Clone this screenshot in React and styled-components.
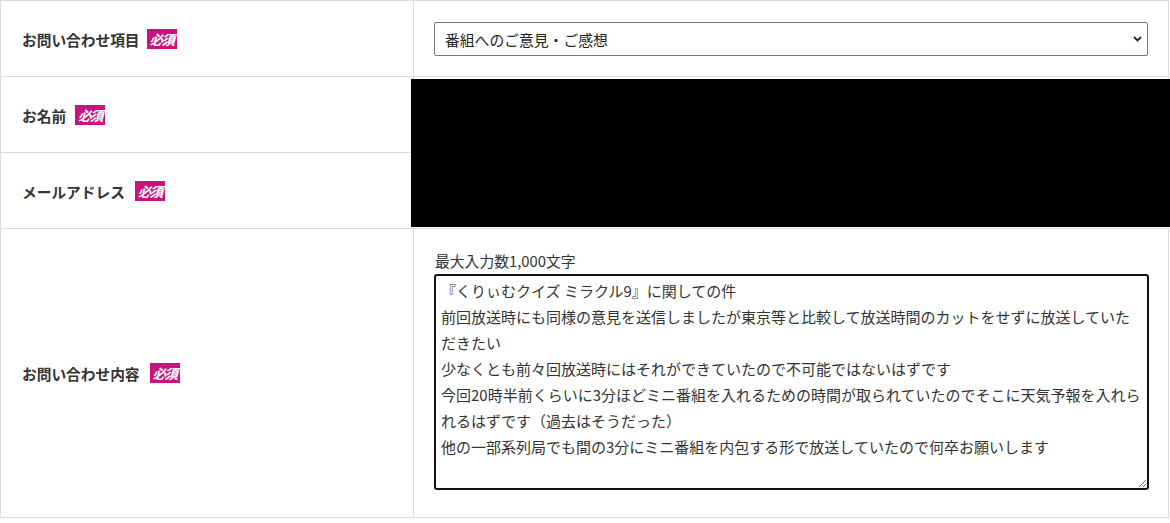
import React from "react";
import styled, { createGlobalStyle } from "styled-components";

const Global = createGlobalStyle`
  html, body { margin: 0; padding: 0; background: #fff; }
  body { font-family: "Noto Sans CJK JP", "Noto Sans", sans-serif; color: #333; }
`;

const Wrap = styled.div`
  position: relative;
  width: 1170px;
  height: 523px;
`;

const Table = styled.div`
  display: grid;
  grid-template-columns: 413px 755px;
  grid-template-rows: 76px 76px 76px 289px;
  width: 1169px;
  border-top: 1px solid #dcdcdc;
  border-left: 1px solid #dcdcdc;
  box-sizing: border-box;
`;

const Cell = styled.div`
  box-sizing: border-box;
  border-right: 1px solid #dcdcdc;
  border-bottom: 1px solid #dcdcdc;
`;

const LabelCell = styled(Cell)`
  display: flex;
  align-items: center;
  padding-left: 21px;
  padding-top: ${(p) => (p.$shift ? "1px" : "0")};
`;

const LabelText = styled.span`
  font-size: 14.7px;
  font-weight: 700;
  color: #333;
`;

const Badge = styled.span`
  display: inline-flex;
  align-items: center;
  justify-content: center;
  width: 30px;
  height: 20px;
  margin-left: ${(p) => p.$gap || 7}px;
  background: #c8127e;
  color: #fff;
  font-size: 13.5px;
  font-weight: 700;
  font-style: italic;
  letter-spacing: -1.5px;
`;

const FieldCell = styled(Cell)`
  display: flex;
  flex-direction: column;
  justify-content: ${(p) => (p.$top ? "flex-start" : "center")};
  padding: ${(p) => (p.$top ? "19px 19px 0 20px" : "0 19px 0 20px")};
`;

const SelectWrap = styled.div`
  position: relative;
  width: 714px;
  height: 34px;
  margin-top: 1px;
`;

const Select = styled.select`
  appearance: none;
  -webkit-appearance: none;
  width: 100%;
  height: 100%;
  box-sizing: border-box;
  border: 1px solid #767676;
  border-radius: 2px;
  background: #fff;
  padding: 0 28px 0 10px;
  font-family: "Noto Sans CJK JP", "Noto Sans", sans-serif;
  font-size: 14.8px;
  color: #222;
  outline: none;
`;

const Chevron = styled.svg`
  position: absolute;
  right: 6px;
  top: 14px;
  width: 9px;
  height: 6px;
  pointer-events: none;
`;

const Hint = styled.div`
  font-size: 14.8px;
  line-height: 25.6px;
  color: #333;
  margin-left: 1px;
`;

const TextArea = styled.textarea`
  display: block;
  width: 715px;
  height: 216px;
  box-sizing: border-box;
  margin: 0;
  border: 2px solid #111;
  border-radius: 3px;
  padding: 2px 4px 0 5px;
  font-family: "Noto Sans CJK JP", "Noto Sans", sans-serif;
  font-size: 15px;
  line-height: 26px;
  color: #333;
  background: #fff;
  outline: none;
  resize: both;
  overflow: hidden;
`;

const Redaction = styled.div`
  position: absolute;
  left: 411px;
  top: 79px;
  width: 759px;
  height: 148px;
  background: #000;
`;

const message = [
  "『くりぃむクイズ ミラクル9』に関しての件",
  "前回放送時にも同様の意見を送信しましたが東京等と比較して放送時間のカットをせずに放送していた",
  "だきたい",
  "少なくとも前々回放送時にはそれができていたので不可能ではないはずです",
  "今回20時半前くらいに3分ほどミニ番組を入れるための時間が取られていたのでそこに天気予報を入れら",
  "れるはずです（過去はそうだった）",
  "他の一部系列局でも間の3分にミニ番組を内包する形で放送していたので何卒お願いします",
].join("\n");

export default function App() {
  return (
    <>
      <Global />
      <Wrap>
        <Table>
          <LabelCell $shift>
            <LabelText>お問い合わせ項目</LabelText>
            <Badge>必須</Badge>
          </LabelCell>
          <FieldCell>
            <SelectWrap>
              <Select defaultValue="opinion">
                <option value="opinion">番組へのご意見・ご感想</option>
              </Select>
              <Chevron viewBox="0 0 9 6">
                <path d="M1 1 L4.5 4.5 L8 1" fill="none" stroke="#222" strokeWidth="1.8" />
              </Chevron>
            </SelectWrap>
          </FieldCell>

          <LabelCell $shift>
            <LabelText>お名前</LabelText>
            <Badge $gap={9}>必須</Badge>
          </LabelCell>
          <FieldCell />

          <LabelCell $shift>
            <LabelText>メールアドレス</LabelText>
            <Badge $gap={10}>必須</Badge>
          </LabelCell>
          <FieldCell />

          <LabelCell>
            <LabelText>お問い合わせ内容</LabelText>
            <Badge $gap={10}>必須</Badge>
          </LabelCell>
          <FieldCell $top>
            <Hint>最大入力数1,000文字</Hint>
            <TextArea defaultValue={message} />
          </FieldCell>
        </Table>
        <Redaction />
      </Wrap>
    </>
  );
}
